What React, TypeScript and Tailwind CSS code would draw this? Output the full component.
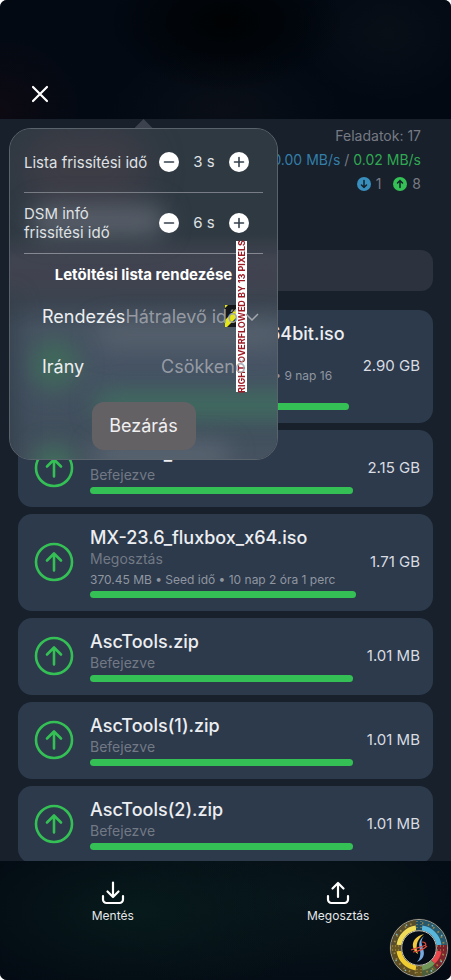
import { ReactNode } from "react"

interface Download {
  name: string
  status: string
  detail?: string
  size: string
}

const downloads: Download[] = [
  {
    name: "linuxmint-cinnamon-64bit.iso",
    status: "Megosztás",
    detail: "2.45 GB • 0.02 MB/s • Seed idő • 9 nap 16 óra 1 perc",
    size: "2.90 GB",
  },
  { name: "MX-23.6_x64.iso", status: "Befejezve", size: "2.15 GB" },
  {
    name: "MX-23.6_fluxbox_x64.iso",
    status: "Megosztás",
    detail: "370.45 MB • Seed idő • 10 nap 2 óra 1 perc",
    size: "1.71 GB",
  },
  { name: "AscTools.zip", status: "Befejezve", size: "1.01 MB" },
  { name: "AscTools(1).zip", status: "Befejezve", size: "1.01 MB" },
  { name: "AscTools(2).zip", status: "Befejezve", size: "1.01 MB" },
]

const DownloadCard = ({ item }: { item: Download }) => (
  <li className="flex shrink-0 items-center rounded-[14px] bg-[#2c3a4c] pt-3 pr-[13px] pb-[13px] pl-4">
    <svg viewBox="0 0 40 40" className="mr-4 size-10 shrink-0" fill="none" stroke="#34c054" strokeLinecap="round" strokeLinejoin="round">
      <circle cx="20" cy="20" r="18" strokeWidth="2.6" />
      <path d="M20 28.500V11.500M13 18.500l7-7 7 7" strokeWidth="2.6" />
    </svg>
    <div className="min-w-0 flex-1">
      <h2 className="text-lg leading-6 font-medium whitespace-nowrap text-[#eceef1]">{item.name}</h2>
      <p className="text-sm leading-[18px] text-[#737984]">{item.status}</p>
      {item.detail && <p className="mt-1 text-xs leading-4 text-[#9096a0]">{item.detail}</p>}
      <div className="mt-[3px] h-[7px] rounded-full bg-[#34c054]" />
    </div>
    <span className="ml-[14px] text-[15px] whitespace-nowrap text-[#d9dce1]">{item.size}</span>
  </li>
)

const RoundButton = ({ label, plus }: { label: string; plus?: boolean }) => (
  <button aria-label={label} className="flex size-5 items-center justify-center rounded-full bg-white">
    <svg viewBox="0 0 20 20" className="size-5" stroke="#36404c" strokeWidth="1.6" strokeLinecap="round">
      <path d={plus ? "M5.500 10h9M10 5.500v9" : "M5.500 10h9"} />
    </svg>
  </button>
)

const Stepper = ({ label, value }: { label: string; value: string }) => (
  <div className="flex h-[60px] items-center pr-[14px]">
    <span className="w-[135px] pr-[10px] text-[15px] leading-[19px] text-[#dfe1e4]">{label}</span>
    <RoundButton label={`${label} csökkentése`} />
    <span className="flex-1 text-center text-[15px] text-[#dfe1e4]">{value}</span>
    <RoundButton label={`${label} növelése`} plus />
  </div>
)

// Frosted glass tint, with soft glows where the list shines through
const Glass = () => (
  <div className="absolute inset-0 overflow-hidden rounded-[21px] bg-[linear-gradient(to_bottom,#2f3942_0,#2f3942_105px,#404450_130px,#40434f_150px,#3b4450_172px,#475362_200px,#465364_240px,#414f5d_300px,#465260_332px)]">
    <div className="absolute top-0 left-3 h-20 w-32 rounded-full bg-[#46404a]/60 blur-lg" />
    <div className="absolute top-[76px] left-5 h-8 w-[136px] rounded-full bg-[#646a76]/80 blur-md" />
    <div className="absolute top-[194px] left-[86px] h-6 w-[190px] rounded-full bg-[#5c6672]/80 blur-md" />
    <div className="absolute top-[212px] left-5 size-12 rounded-full bg-[#3d7058]/80 blur-md" />
    <div className="absolute top-[264px] left-[84px] h-6 w-[220px] rounded-full bg-[#3e7860]/80 blur-md" />
    <div className="absolute top-[318px] left-6 size-10 rounded-full bg-[#3d7a5a]/80 blur-md" />
    <div className="absolute top-[314px] left-[84px] h-6 w-[136px] rounded-full bg-[#66707c]/70 blur-md" />
    <div className="absolute top-[170px] -left-4 h-[180px] w-5 bg-[#2c3742]/80 blur-md" />
  </div>
)

const SettingsPopover = () => (
  <div className="absolute top-0 left-[9px] z-10 w-[269px]">
    <div className="mx-auto h-[9px] w-[18px] bg-[#3d434e] [clip-path:polygon(50%_0,100%_100%,0_100%)]" />
    <div className="relative rounded-[22px] border border-[#5a626c] bg-[#2f3942] px-[14px] pt-[3px] pb-[9px]">
      <Glass />
      <div className="relative">
        <Stepper label="Lista frissítési idő" value="3 s" />
        <hr className="border-[#777c85]" />
        <Stepper label="DSM infó frissítési idő" value="6 s" />
        <hr className="border-[#858890]" />
        <h3 className="flex h-[43px] items-center justify-center text-[15px] font-bold text-white">
          Letöltési lista rendezése
        </h3>
      </div>

      {/* Overflow marker */}
      <svg viewBox="0 0 11 22" className="absolute top-[176px] left-[215px] h-[22px] w-[11px]">
        <path d="M0 0h11v22H0z" fill="#15171a" />
        <path d="M11 4v9L2 22H0v-7zM0 0h3L0 3z" fill="#e6e619" />
      </svg>
      <div className="absolute top-[112px] left-[226px] flex h-[151px] w-[11px] rotate-180 items-center justify-center bg-white text-[9px] leading-none font-bold whitespace-nowrap text-[#9c1c26] [writing-mode:vertical-rl]">
        RIGHT OVERFLOWED BY 13 PIXELS
      </div>

      <div className="relative">
        <div className="flex h-10 items-center pl-[18px] text-lg">
          <label htmlFor="sort" className="text-[#eceef0]">Rendezés</label>
          <select id="sort" className="w-[120px] shrink-0 appearance-none bg-transparent text-[#a0a4ad]/90 outline-none">
            <option>Hátralevő idő</option>
          </select>
          <svg viewBox="0 0 14 8" className="h-2 w-[14px] shrink-0" fill="none" stroke="#a4a7ae" strokeWidth="1.5">
            <path d="M1 1l6 6 6-6" />
          </svg>
        </div>
        <div className="mt-[10px] flex h-10 items-center justify-between pr-3 pl-[18px] text-lg">
          <label htmlFor="direction" className="text-[#eceef0]">Irány</label>
          <select id="direction" className="w-[90px] appearance-none bg-transparent text-[#a0a4ad]/90 outline-none">
            <option>Csökkenő</option>
          </select>
        </div>
        <div className="mt-[15px] flex justify-center">
          <button className="h-12 w-[104px] rounded-xl bg-[#646165] text-lg text-[#f0f0f1]">Bezárás</button>
        </div>
      </div>
    </div>
  </div>
)

const Logo = () => (
  <svg viewBox="-30 -30 60 60" className="absolute right-[2px] bottom-[2px] size-[60px]" fill="none">
    <circle r="29.5" fill="#25292b" />
    <circle r="28.4" stroke="#b5b2a2" strokeWidth="1" />
    <path d="M-25-2A25 25 0 0 1-2-25" stroke="#574d2c" strokeWidth="6" />
    <path d="M2-25A25 25 0 0 1 25-2" stroke="#28586b" strokeWidth="6" />
    <path d="M25 2A25 25 0 0 1 16 19" stroke="#7c252b" strokeWidth="6" />
    <path d="M16 19A25 25 0 0 1 2 25" stroke="#4b5d39" strokeWidth="6" />
    <path d="M-2 25A25 25 0 0 1-25 2" stroke="#5d4d22" strokeWidth="6" />
    <circle r="25" stroke="#9a8446" strokeWidth="2" strokeDasharray="1.5 4.5" />
    <circle r="26" stroke="#86b9c0" strokeWidth="1.5" strokeDasharray="1.5 12" />
    <path d="M-20-3A20 20 0 0 1-3-20" stroke="#f0dc58" strokeWidth="5" />
    <path d="M3-20A20 20 0 0 1 20-3" stroke="#58b5dc" strokeWidth="5" />
    <path d="M20 3A20 20 0 0 1 14 14" stroke="#e9484d" strokeWidth="5" />
    <path d="M14 14A20 20 0 0 1 3 20" stroke="#719858" strokeWidth="5" />
    <path d="M-3 20A20 20 0 0 1-20 3" stroke="#f0cb32" strokeWidth="5" />
    <path d="M0-28v10" stroke="#234e60" strokeWidth="6" />
    <path d="M18 0h10" stroke="#7a222b" strokeWidth="6" />
    <path d="M0 18v10M-28 0h10" stroke="#695722" strokeWidth="6" />
    <path d="M-2-27v9M2-27v9M-2 18v9M2 18v9M-27-2h9M-27 2h9M18-2h9M18 2h9" stroke="#b29b5c" strokeWidth="1" strokeDasharray="1 2" />
    <circle r="17.3" fill="#060c15" stroke="#c5c2b5" strokeWidth="1" />
    <path d="M5-14C-3-12-7-7-6-1-5 3-3 5-1 6-3 0-4-7 5-14z" fill="#f0c840" />
    <path d="M5-12C-1-7 0-3 1 2 2 7 1 11-2 14 5 11 6 6 4 1 3-4 1-7 5-12z" fill="#77a9df" />
    <path d="M-8 2C-2 0 2-1 7-3M3-6c3 0 5 2 3 4M-6 4C0 3 4 2 8-2" stroke="#dc4b3c" strokeWidth="1.2" />
  </svg>
)

const BottomAction = ({ label, children }: { label: string; children: ReactNode }) => (
  <button className="flex flex-1 flex-col items-center pt-5 text-xs leading-4 text-[#e5e7e8]">
    <svg viewBox="0 0 24 24" className="mb-[3px] size-6" fill="none" stroke="white" strokeWidth="2.2" strokeLinecap="round" strokeLinejoin="round">
      <path d="M2 15v3.500a3.500 3.500 0 0 0 3.500 3.500h13a3.500 3.500 0 0 0 3.500-3.500V15" />
      {children}
    </svg>
    {label}
  </button>
)

const App = () => {
  return (
    <div className="h-screen bg-white font-[Inter,sans-serif]">
      <div className="flex h-full flex-col overflow-hidden rounded-[7px] bg-[#17202b]">
        <header className="flex h-[119px] shrink-0 items-end bg-[#020913] bg-[radial-gradient(ellipse_120px_70px_at_50%_22px,#000203,#00020300),radial-gradient(ellipse_90px_80px_at_0_110px,#0d0a12,#0d0a1200),radial-gradient(ellipse_120px_60px_at_50%_110px,#0a0f17,#0a0f1700),radial-gradient(ellipse_90px_70px_at_86%_34px,#090f17,#090f1700)] pb-[15px] pl-[30px]">
          <button aria-label="Bezárás" className="flex size-5 items-center justify-center">
            <svg viewBox="0 0 20 20" className="size-5 shrink-0" stroke="white" strokeWidth="2.2" strokeLinecap="round">
              <path d="M3 3l14 14M17 3L3 17" />
            </svg>
          </button>
        </header>

        <main className="relative flex min-h-0 flex-1 flex-col overflow-hidden px-[18px]">
          <SettingsPopover />

          {/* Transfer summary */}
          <div className="pt-[5px] pr-3 text-right text-sm leading-6 text-[#777a83]">
            <p>Feladatok: 17</p>
            <p>
              <span className="text-[#347ea9]">0.00 MB/s</span> / <span className="text-[#31a852]">0.02 MB/s</span>
            </p>
            <p className="flex items-center justify-end">
              <svg viewBox="0 0 14 14" className="mr-[5px] size-[14px]" fill="none" stroke="#17202b" strokeWidth="1.5" strokeLinecap="round">
                <circle cx="7" cy="7" r="7" fill="#388fbd" stroke="none" />
                <path d="M7 3.500v7M4.500 8L7 10.500 9.500 8" />
              </svg>
              1
              <svg viewBox="0 0 14 14" className="mr-[5px] ml-3 size-[14px]" fill="none" stroke="#17202b" strokeWidth="1.5" strokeLinecap="round">
                <circle cx="7" cy="7" r="7" fill="#34c054" stroke="none" />
                <path d="M7 10.500v-7M4.500 6L7 3.500 9.500 6" />
              </svg>
              8
            </p>
          </div>

          <input type="search" aria-label="Keresés" className="mt-[54px] h-[41px] shrink-0 rounded-xl bg-[#2c323e]" />

          <ul className="mt-[19px] flex flex-col gap-[7px]">
            {downloads.map((item) => (
              <DownloadCard key={item.name} item={item} />
            ))}
          </ul>
        </main>

        <footer className="relative flex h-[119px] shrink-0 items-start bg-[#030a13] bg-[radial-gradient(ellipse_190px_90px_at_30%_50px,#071a1b,#071a1b00),radial-gradient(ellipse_210px_100px_at_66%_40px,#08161b,#08161b00)]">
          <BottomAction label="Mentés">
            <path d="M12 1.500v14M6.500 10.500l5.500 5.500 5.500-5.500" />
          </BottomAction>
          <BottomAction label="Megosztás">
            <path d="M12 16V2M6.500 7.500L12 2l5.500 5.500" />
          </BottomAction>
          <Logo />
        </footer>
      </div>
    </div>
  )
}

export default App
